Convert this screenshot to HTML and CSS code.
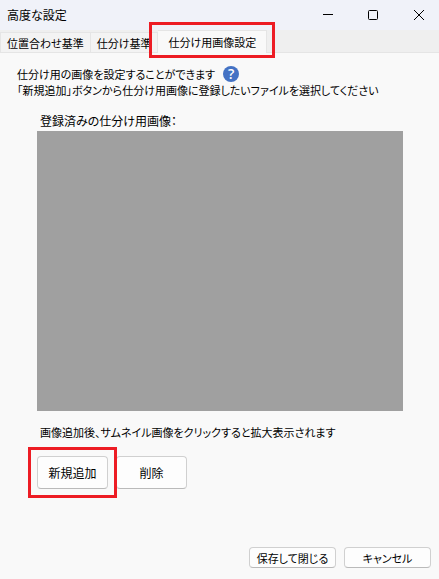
FILE: index.html
```html
<!DOCTYPE html>
<html lang="ja">
  <head>
    <meta charset="UTF-8" />
    <meta name="viewport" content="width=device-width, initial-scale=1.0" />
    <title>高度な設定</title>
    <link rel="stylesheet" href="styles.css">
  </head>
  <body>
    <div class="dialog">
      <header class="title_bar">
        <h1>高度な設定</h1>
        <div class="window_buttons">
          <button type="button" aria-label="最小化">
            <svg width="10" height="10" viewBox="0 0 10 10"><path d="M0 4.5h10" /></svg>
          </button>
          <button type="button" aria-label="最大化">
            <svg width="10" height="10" viewBox="0 0 10 10"><rect x="0.5" y="0.5" width="9" height="9" rx="1" /></svg>
          </button>
          <button type="button" aria-label="閉じる">
            <svg width="10" height="10" viewBox="0 0 10 10"><path d="M0 0l10 10M10 0L0 10" /></svg>
          </button>
        </div>
      </header>

      <div class="tabs" role="tablist">
        <button type="button" class="tab" role="tab" aria-selected="false">位置合わせ基準</button>
        <button type="button" class="tab" role="tab" aria-selected="false">仕分け基準</button>
        <button type="button" class="tab active mark" role="tab" aria-selected="true">仕分け用画像設定</button>
      </div>

      <main class="panel" role="tabpanel">
        <div class="guide">
          <p>仕分け用の画像を設定することができます</p>
          <button type="button" class="help" aria-label="ヘルプ">?</button>
        </div>
        <p class="guide_sub">「新規追加」ボタンから仕分け用画像に登録したいファイルを選択してください</p>

        <section class="images">
          <h2 id="images_label">登録済みの仕分け用画像：</h2>
          <div class="thumbnails" role="list" aria-labelledby="images_label"></div>
          <p class="note">画像追加後、サムネイル画像をクリックすると拡大表示されます</p>
          <div class="actions">
            <button type="button" class="btn large mark">新規追加</button>
            <button type="button" class="btn large">削除</button>
          </div>
        </section>
      </main>

      <footer class="footer">
        <button type="button" class="btn">保存して閉じる</button>
        <button type="button" class="btn">キャンセル</button>
      </footer>
    </div>
  </body>
</html>
```
FILE: styles.css
```css
* {
  margin: 0;
  padding: 0;
  box-sizing: border-box;
}
body {
  background: #f9f9f9;
  color: #000;
  font-family: "Noto Sans CJK JP", sans-serif;
  font-size: 11px;
  line-height: 16px;
  font-feature-settings: "palt";
}
button {
  font: inherit;
  font-feature-settings: inherit;
  color: inherit;
  white-space: nowrap;
}
h1,
h2 {
  font-size: 12px;
  font-weight: normal;
}
.dialog {
  display: flex;
  flex-direction: column;
  min-height: 100vh;
}

/* タイトルバー */
.title_bar {
  display: flex;
  justify-content: space-between;
  align-items: center;
  height: 30px;
  padding-left: 7px;
  background: #f0f2f9;
}
.window_buttons {
  display: flex;
}
.window_buttons button {
  display: flex;
  align-items: center;
  justify-content: center;
  width: 45px;
  height: 28px;
  border: none;
  background: none;
}
.window_buttons button:last-child {
  width: 44px;
  padding-left: 4px;
}
.window_buttons svg {
  fill: none;
  stroke: #000;
  stroke-width: 1;
}

/* タブ */
.tabs {
  display: flex;
  align-items: flex-end;
  height: 23px;
  background: #efefef;
  border-bottom: 1px solid #e5e5e5;
}
.tab {
  height: 20px;
  padding: 0 6px;
  background: #f3f3f3;
  border: 1px solid #e5e5e5;
  border-bottom: none;
}
.tab + .tab {
  border-left: none;
}
.tab.active {
  height: 23px;
  padding: 0 10px;
  margin-bottom: -1px;
  background: #f9f9f9;
}

/* 強調枠 */
.mark {
  position: relative;
}
.mark::after {
  content: "";
  position: absolute;
  inset: -10px;
  z-index: 1;
  border: 3px solid #ed1c24;
  pointer-events: none;
}
.tab.mark::after {
  inset: -9px -9px -5px;
}

/* 本文 */
.panel {
  flex: 1;
  padding: 13px 36px 0 17px;
}
.guide {
  display: flex;
  align-items: center;
  gap: 8px;
  height: 16px;
}
.guide p,
.guide_sub,
.note {
  white-space: nowrap;
}
.help {
  width: 16px;
  height: 16px;
  border: none;
  border-radius: 50%;
  background: #4472c4;
  color: #fff;
  font-family: "Open Sans", sans-serif;
  font-size: 14px;
  font-weight: 600;
  line-height: 16px;
}
.images {
  padding: 15px 0 0 20px;
}
.images h2,
.note {
  padding-left: 3px;
}
.thumbnails {
  height: 280px;
  margin: 2px 0 13px;
  background: #a0a0a0;
}
.actions {
  display: flex;
  gap: 8px;
  padding-top: 16px;
}
.btn {
  width: 87px;
  height: 21px;
  background: #fdfdfd;
  border: 1px solid #d0d0d0;
  border-bottom-color: #bababa;
  border-radius: 4px;
  line-height: 18px;
}
.btn.large {
  width: 71px;
  height: 33px;
  font-size: 12px;
}
.footer {
  display: flex;
  justify-content: flex-end;
  gap: 8px;
  padding: 0 8px 11px;
}
```
